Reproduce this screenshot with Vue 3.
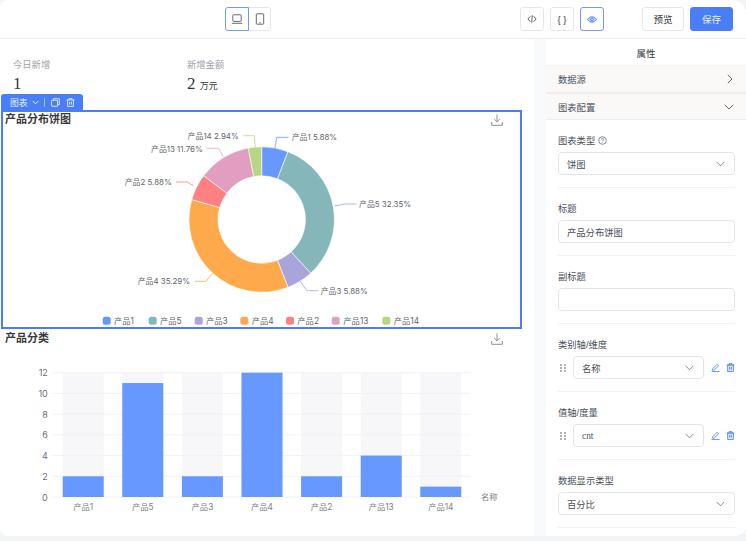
<script setup>
const pieData = [
  { name: '产品1', pct: 5.88, color: '#6698ff' },
  { name: '产品5', pct: 32.35, color: '#85b7ba' },
  { name: '产品3', pct: 5.88, color: '#a9a5dc' },
  { name: '产品4', pct: 35.29, color: '#ffa94d' },
  { name: '产品2', pct: 5.88, color: '#ff8080' },
  { name: '产品13', pct: 11.76, color: '#e29ec0' },
  { name: '产品14', pct: 2.94, color: '#b7d583' }
]
const cx = 261.7, cy = 219.5, R = 72.7, r = 43.7
const pt = (rad, a) => `${(cx + rad * Math.sin(a)).toFixed(2)} ${(cy - rad * Math.cos(a)).toFixed(2)}`
let acc = 0
const total = pieData.reduce((s, d) => s + d.pct, 0)
const arcs = pieData.map((d) => {
  const a0 = (acc / total) * Math.PI * 2
  acc += d.pct
  const a1 = (acc / total) * Math.PI * 2
  const large = a1 - a0 > Math.PI ? 1 : 0
  return {
    color: d.color,
    d: `M${pt(R, a0)}A${R} ${R} 0 ${large} 1 ${pt(R, a1)}L${pt(r, a1)}A${r} ${r} 0 ${large} 0 ${pt(r, a0)}Z`
  }
})
const pieLabels = [
  { t: '产品1 5.88%', x: 291.7, y: 137.3, a: 'start', c: '#6698ff', p: '275,148.3 276.7,137.3 288.3,137.3' },
  { t: '产品5 32.35%', x: 359, y: 204.3, a: 'start', c: '#85b7ba', p: '334.3,206 345,204 356.7,204' },
  { t: '产品3 5.88%', x: 320.7, y: 291, a: 'start', c: '#a9a5dc', p: '300,280.7 306.7,290.7 318.3,290.7' },
  { t: '产品4 35.29%', x: 190, y: 281.3, a: 'end', c: '#ffa94d', p: '211.7,274 206,281.3 195,281.3' },
  { t: '产品2 5.88%', x: 171.7, y: 182.3, a: 'end', c: '#ff8080', p: '193.3,185.7 187.3,182 176,182' },
  { t: '产品13 11.76%', x: 202.7, y: 148.7, a: 'end', c: '#e29ec0', p: '223.3,156.7 218.3,148.3 206.7,148.3' },
  { t: '产品14 2.94%', x: 238.7, y: 136.3, a: 'end', c: '#b7d583', p: '255.3,147.3 254.3,135.7 243.3,135.7' }
]
const legend = [
  { n: '产品1', s: 102.7, c: '#6698ff', x: 114 },
  { n: '产品5', s: 148.7, c: '#85b7ba', x: 160 },
  { n: '产品3', s: 194.7, c: '#a9a5dc', x: 206 },
  { n: '产品4', s: 240.3, c: '#ffa94d', x: 251.7 },
  { n: '产品2', s: 286, c: '#ff8080', x: 297.3 },
  { n: '产品13', s: 331.7, c: '#e29ec0', x: 343.3 },
  { n: '产品14', s: 382.3, c: '#b7d583', x: 393.7 }
]
const barBase = 497
const unit = (497 - 372.7) / 12
const bars = [
  ['产品1', 2], ['产品5', 11], ['产品3', 2], ['产品4', 12], ['产品2', 2], ['产品13', 4], ['产品14', 1]
].map(([n, v], i) => ({
  n,
  x: 62.7 + 59.6 * i,
  h: v * unit,
  y: barBase - v * unit
}))
const ticks = [0, 2, 4, 6, 8, 10, 12].map((v) => ({ v, y: barBase - v * unit }))
</script>

<template>
  <div class="page">
    <div class="app">
      <header class="top">
        <div class="seg">
          <button class="seg-btn on">
            <svg width="12" height="12" viewBox="0 0 12 12" fill="none" stroke="#555b66" stroke-width=".9"><rect x="1.800" y="1.800" width="8.400" height="6.600" rx=".6"/><path d="M.8 10.300h10.400"/></svg>
          </button>
          <button class="seg-btn">
            <svg width="12" height="12" viewBox="0 0 12 12" fill="none" stroke="#555b66" stroke-width=".9"><rect x="2.300" y=".8" width="7.400" height="10.400" rx=".7"/><circle cx="6" cy="9.800" r=".3"/></svg>
          </button>
        </div>
        <div class="tools">
          <button class="tool">
            <svg width="10" height="10" viewBox="0 0 10 10" fill="none" stroke="#4b5059" stroke-width=".9"><path d="M3.300 2.200.9 5l2.400 2.800M6.700 2.200 9.100 5 6.700 7.800M5.300 1.200 4.700 8.800"/></svg>
          </button>
          <button class="tool brace">{ }</button>
          <button class="tool on">
            <svg width="10" height="7" viewBox="0 0 12 8" fill="#bcd0fb" stroke="#4a7ef6" stroke-width="1"><path d="M.7 4C2.200 1.700 4 .7 6 .7S9.800 1.700 11.300 4C9.800 6.300 8 7.300 6 7.300S2.200 6.300.7 4Z"/><circle cx="6" cy="4" r="1.700"/></svg>
          </button>
        </div>
        <div class="actions">
          <button class="btn">预览</button>
          <button class="btn primary">保存</button>
        </div>
      </header>

      <div class="body">
        <main class="canvas">
          <section class="stats">
            <div class="stat">
              <div class="stat-label">今日新增</div>
              <div class="stat-value">1</div>
            </div>
            <div class="stat">
              <div class="stat-label">新增金额</div>
              <div class="stat-value">2 <span class="unit">万元</span></div>
            </div>
          </section>

          <section class="chart selected">
            <div class="tab">
              <span>图表</span>
              <svg width="7" height="5" viewBox="0 0 7 5" fill="none" stroke="#fff" stroke-width=".9"><path d="M.8 1 3.500 3.800 6.200 1"/></svg>
              <i class="tab-sep"></i>
              <svg width="9" height="9" viewBox="0 0 9 9" fill="none" stroke="#fff" stroke-width=".8"><rect x=".6" y="2.300" width="6" height="6" rx=".6"/><path d="M2.300 2.300V.7h6v6H6.600"/></svg>
              <svg class="tab-trash" width="9" height="9" viewBox="0 0 9 9" fill="none" stroke="#fff" stroke-width=".8"><path d="M.6 1.900h7.800M3 1.900V.6h3v1.300M1.600 1.900v6.500h5.800V1.900M3.600 3.800v2.800M5.400 3.800v2.800"/></svg>
            </div>
            <div class="chart-head">
              <h3>产品分布饼图</h3>
              <svg width="12" height="12" viewBox="0 0 12 12" fill="none" stroke="#72767e" stroke-width=".8"><path d="M6 .4v7.200M3.200 5 6 7.800 8.800 5M.7 8v3.300h10.600V8"/></svg>
            </div>
            <svg class="plot" width="517" height="200" viewBox="3 127 517 200">
              <path v-for="a in arcs" :key="a.color" :d="a.d" :fill="a.color" stroke="#fff" stroke-width=".6" />
              <g v-for="l in pieLabels" :key="l.t">
                <polyline :points="l.p" fill="none" :stroke="l.c" stroke-width=".8" />
                <text :x="l.x" :y="l.y" :text-anchor="l.a" dominant-baseline="central" class="lbl pie">{{ l.t }}</text>
              </g>
              <g v-for="l in legend" :key="l.n">
                <rect :x="l.s" y="316.700" width="8" height="8" rx="2.500" :fill="l.c" />
                <text :x="l.x" y="320.700" dominant-baseline="central" class="lbl">{{ l.n }}</text>
              </g>
            </svg>
          </section>

          <section class="chart plain">
            <div class="chart-head">
              <h3>产品分类</h3>
              <svg width="12" height="12" viewBox="0 0 12 12" fill="none" stroke="#72767e" stroke-width=".8"><path d="M6 .4v7.200M3.200 5 6 7.800 8.800 5M.7 8v3.300h10.600V8"/></svg>
            </div>
            <svg class="plot" width="520" height="185" viewBox="0 346 520 185">
              <rect v-for="b in bars" :key="'bg' + b.n" :x="b.x" y="372.700" width="41" height="124.300" fill="#f7f7f9" />
              <line v-for="t in ticks" :key="t.v" x1="53" x2="470.300" :y1="t.y" :y2="t.y" stroke="#eff0f3" stroke-width=".9" />
              <text v-for="t in ticks" :key="'y' + t.v" x="47.800" :y="t.y" text-anchor="end" dominant-baseline="central" class="tick">{{ t.v }}</text>
              <rect v-for="b in bars" :key="b.n" :x="b.x" :y="b.y" width="41" :height="b.h" fill="#6698ff" />
              <text v-for="b in bars" :key="'x' + b.n" :x="b.x + 20.500" y="507" text-anchor="middle" dominant-baseline="central" class="lbl axis">{{ b.n }}</text>
              <text x="481" y="496.500" dominant-baseline="central" class="lbl axis">名称</text>
            </svg>
          </section>
        </main>

        <div class="gutter"></div>

        <aside class="panel">
          <div class="panel-title">属性</div>
          <div class="sec first">
            <span>数据源</span>
            <svg width="8" height="10" viewBox="0 0 8 10" fill="none" stroke="#555b66" stroke-width=".9"><path d="M1.800.8 6 5 1.800 9.200"/></svg>
          </div>
          <div class="sec">
            <span>图表配置</span>
            <svg width="10" height="8" viewBox="0 0 10 8" fill="none" stroke="#555b66" stroke-width=".9"><path d="M.8 1.800 5 6 9.200 1.800"/></svg>
          </div>

          <div class="form">
            <div class="group">
              <label class="lab">图表类型
                <svg width="9" height="9" viewBox="0 0 9 9" fill="none" stroke="#555b66" stroke-width=".7"><circle cx="4.500" cy="4.500" r="3.800"/><path d="M3.300 3.500c0-1.500 2.400-1.500 2.400 0 0 .9-1.200.9-1.200 1.800M4.500 6.200v.6"/></svg>
              </label>
              <div class="field select"><span>饼图</span><svg class="chev" width="9" height="6" viewBox="0 0 9 6" fill="none" stroke="#666b75" stroke-width=".8"><path d="M.8 1 4.500 4.800 8.200 1"/></svg></div>
            </div>
            <div class="group">
              <label class="lab">标题</label>
              <div class="field"><span>产品分布饼图</span></div>
            </div>
            <div class="group">
              <label class="lab">副标题</label>
              <div class="field"></div>
            </div>
            <div class="group">
              <label class="lab">类别轴/维度</label>
              <div class="drag-row">
                <svg width="6" height="8" viewBox="0 0 6 8" fill="#4b5059"><circle cx="1" cy="1" r=".8"/><circle cx="5" cy="1" r=".8"/><circle cx="1" cy="4" r=".8"/><circle cx="5" cy="4" r=".8"/><circle cx="1" cy="7" r=".8"/><circle cx="5" cy="7" r=".8"/></svg>
                <div class="field select grow"><span>名称</span><svg class="chev" width="9" height="6" viewBox="0 0 9 6" fill="none" stroke="#666b75" stroke-width=".8"><path d="M.8 1 4.500 4.800 8.200 1"/></svg></div>
                <svg width="9" height="9" viewBox="0 0 9 9" fill="none" stroke="#4a7ef6" stroke-width=".8"><path d="M1.500 6 6 1.300l1.500 1.500L3 7.200H1.500ZM.5 8.500h8"/></svg>
                <svg width="9" height="9" viewBox="0 0 9 9" fill="#dbe5fd" stroke="#4a7ef6" stroke-width=".8"><path d="M1.600 2v6.500h5.800V2Z"/><path d="M.6 2h7.800M3 2V.6h3V2M3.600 4v2.600M5.400 4v2.600" fill="none"/></svg>
              </div>
            </div>
            <div class="group">
              <label class="lab">值轴/度量</label>
              <div class="drag-row">
                <svg width="6" height="8" viewBox="0 0 6 8" fill="#4b5059"><circle cx="1" cy="1" r=".8"/><circle cx="5" cy="1" r=".8"/><circle cx="1" cy="4" r=".8"/><circle cx="5" cy="4" r=".8"/><circle cx="1" cy="7" r=".8"/><circle cx="5" cy="7" r=".8"/></svg>
                <div class="field select grow"><span class="latin">cnt</span><svg class="chev" width="9" height="6" viewBox="0 0 9 6" fill="none" stroke="#666b75" stroke-width=".8"><path d="M.8 1 4.500 4.800 8.200 1"/></svg></div>
                <svg width="9" height="9" viewBox="0 0 9 9" fill="none" stroke="#4a7ef6" stroke-width=".8"><path d="M1.500 6 6 1.300l1.500 1.500L3 7.200H1.500ZM.5 8.500h8"/></svg>
                <svg width="9" height="9" viewBox="0 0 9 9" fill="#dbe5fd" stroke="#4a7ef6" stroke-width=".8"><path d="M1.600 2v6.500h5.800V2Z"/><path d="M.6 2h7.800M3 2V.6h3V2M3.600 4v2.600M5.400 4v2.600" fill="none"/></svg>
              </div>
            </div>
            <div class="group">
              <label class="lab">数据显示类型</label>
              <div class="field select"><span>百分比</span><svg class="chev" width="9" height="6" viewBox="0 0 9 6" fill="none" stroke="#666b75" stroke-width=".8"><path d="M.8 1 4.500 4.800 8.200 1"/></svg></div>
            </div>
          </div>
        </aside>
      </div>
    </div>
  </div>
</template>

<style>
html, body { margin: 0; background: #f3f4f6; }
</style>

<style scoped>
.page {
  width: 746px;
  height: 541px;
  background: #f3f4f6;
  font-family: "Liberation Sans", "Noto Sans CJK SC", sans-serif;
  color: #4b5059;
  overflow: hidden;
}
.app {
  height: 536px;
  background: #fff;
  border-radius: 8px 14px 10px 8px;
  overflow: hidden;
  display: flex;
  flex-direction: column;
}
.top {
  height: 38px;
  flex: none;
  box-sizing: content-box;
  border-bottom: 1px solid #ebecee;
  display: flex;
  align-items: center;
  padding: 0 13px 0 225px;
}
button {
  font-family: inherit;
  padding: 0;
  margin: 0;
  background: #fff;
  display: flex;
  align-items: center;
  justify-content: center;
  box-sizing: border-box;
  height: 24px;
}
.seg { display: flex; }
.seg-btn {
  width: 23px;
  border: 1px solid #e6e7ea;
  border-radius: 0 3px 3px 0;
  margin-left: -1px;
}
.seg-btn.on {
  margin-left: 0;
  width: 24px;
  border-color: #6f9af5;
  border-radius: 3px 0 0 3px;
  position: relative;
  z-index: 1;
}
.tools { display: flex; gap: 6px; margin-left: auto; }
.tool {
  width: 24px;
  border: 1px solid #e6e7ea;
  border-radius: 3px;
}
.tool.on { border-color: #6f9af5; }
.brace { font-size: 9.500px; color: #3b4048; }
.actions { display: flex; gap: 6px; margin-left: 38px; }
.btn {
  width: 42px;
  border: 1px solid #e6e7ea;
  border-radius: 3px;
  font-size: 9.500px;
  color: #33373d;
}
.btn.primary { width: 43px; background: #4a7ef6; border-color: #4a7ef6; color: #e8efff; }

.body { flex: 1; min-height: 0; display: flex; }
.canvas { width: 534px; flex: none; position: relative; }
.gutter { width: 12px; flex: none; background: #f9fafb; }
.panel { flex: 1; min-width: 0; }

.stats {
  height: 71px;
  box-sizing: border-box;
  padding: 20px 0 0 13px;
  display: flex;
}
.stat { width: 174px; }
.stat-label { font-size: 9.300px; line-height: 12px; color: #a0a3aa; }
.stat-value {
  margin-top: 3px;
  font-family: "Liberation Serif", "Noto Sans CJK SC", serif;
  font-size: 17px;
  line-height: 20px;
  color: #33373d;
}
.unit { font-size: 9px; font-family: "Noto Sans CJK SC", sans-serif; }

.chart { position: relative; width: 522px; }
.chart.selected {
  box-sizing: border-box;
  margin-left: 1px;
  width: 521px;
  height: 219px;
  border: 2px solid #4a7ef6;
}
.chart.plain { padding-top: 2px; }
.chart-head {
  height: 15px;
  display: flex;
  justify-content: space-between;
  align-items: center;
  padding: 0 17px 0 2px;
}
.chart.plain .chart-head { padding: 0 19px 0 5px; }
h3 { margin: 0; font-size: 11px; line-height: 13px; font-weight: 700; color: #3a3a3a; }
.plot { display: block; font-family: Inter, "Noto Sans CJK SC", sans-serif; }
.tab {
  position: absolute;
  left: -2px;
  top: -18px;
  width: 82px;
  height: 16px;
  background: #4a7ef6;
  border-radius: 3px 3px 0 0;
  display: flex;
  align-items: center;
  padding-left: 9px;
  box-sizing: border-box;
  font-size: 8.800px;
  color: #e8efff;
}
.tab svg { margin-left: 4px; }
.tab-sep { width: 1px; height: 9px; background: #9dbcfa; margin-left: 5px; margin-right: 2px; }
.tab .tab-trash { margin-left: 6px; }
.lbl { font-size: 8.300px; fill: #62656d; }
.lbl.pie { font-size: 7.900px; }
.lbl.axis { fill: #7a7d85; }
.tick { font-size: 9px; fill: #6b6e76; }

.panel-title {
  height: 27px;
  border-bottom: 1px solid #f3f3f4;
  box-sizing: border-box;
  text-align: center;
  font-size: 9.500px;
  line-height: 29px;
  color: #33373d;
}
.sec {
  height: 26px;
  box-sizing: border-box;
  background: #faf9f8;
  border-bottom: 1px solid #eeeeef;
  display: flex;
  align-items: center;
  justify-content: space-between;
  padding: 0 12px;
  font-size: 9.300px;
  color: #4b5059;
}
.sec.first { height: 28px; border-bottom-width: 2px; }
.form { padding-top: 12px; }
.group {
  margin: 0 11px 12px 12px;
  padding-bottom: 12px;
  border-bottom: 1px solid #f1f2f4;
}
.lab {
  display: flex;
  align-items: center;
  gap: 3px;
  height: 16px;
  margin-bottom: 4px;
  font-size: 9.300px;
  color: #4b5059;
}
.field {
  height: 23px;
  box-sizing: border-box;
  border: 1px solid #e2e5ea;
  border-radius: 4px;
  display: flex;
  align-items: center;
  justify-content: space-between;
  padding: 0 9px 0 8px;
  font-size: 9.300px;
  color: #4b5059;
}
.chev { flex: none; }
.latin { font-family: "Liberation Serif", serif; }
.drag-row { display: flex; align-items: center; }
.drag-row > svg:first-child { margin-left: 2px; margin-right: 7px; }
.grow { flex: 1; margin-right: 7px; }
.drag-row > svg:last-child { margin-left: 6px; }
</style>
